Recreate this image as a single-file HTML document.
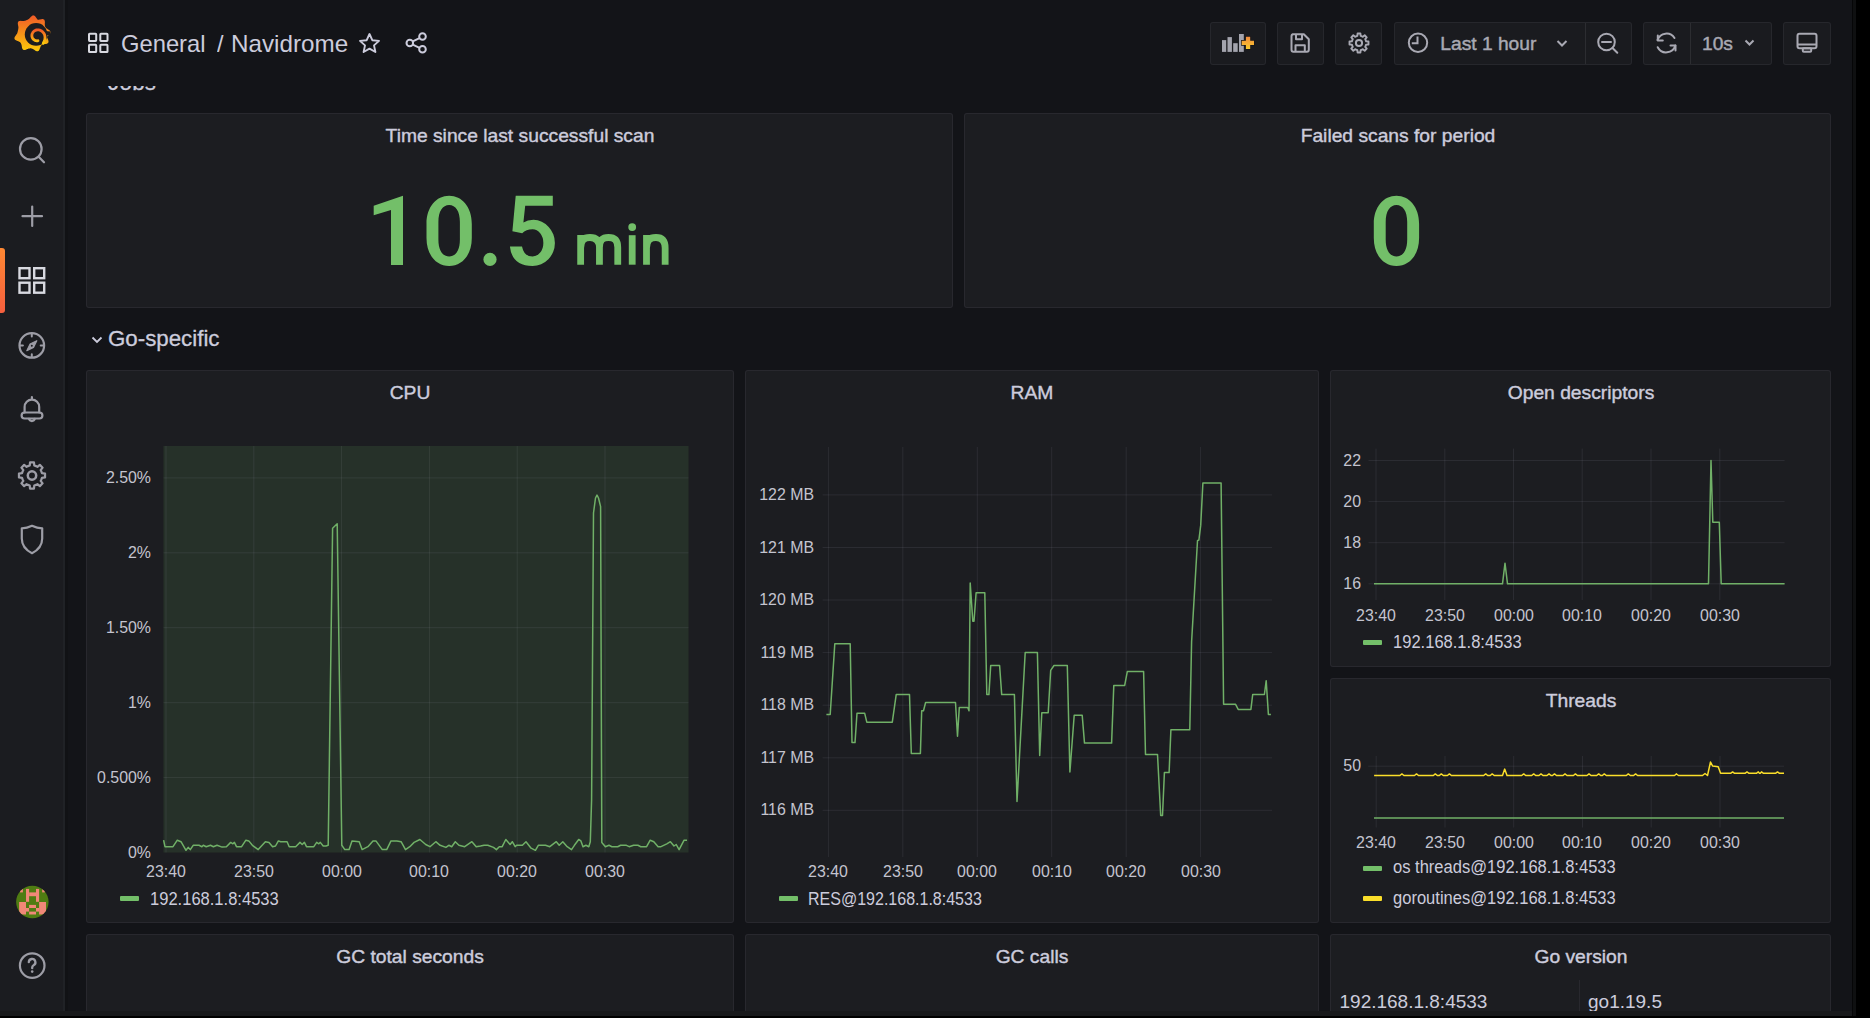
<!DOCTYPE html><html><head><meta charset="utf-8"><style>
html,body{margin:0;padding:0;}
body{width:1870px;height:1018px;overflow:hidden;background:#131418;position:relative;font-family:"Liberation Sans",sans-serif;}
.a{position:absolute;box-sizing:border-box;}
.t{position:absolute;white-space:nowrap;line-height:1;}
.panel{position:absolute;box-sizing:border-box;background:#1c1d21;border:1px solid rgba(204,204,220,0.07);border-radius:3px;}
.btn{position:absolute;box-sizing:border-box;background:#1a1b1f;border:1px solid rgba(204,204,220,0.07);border-radius:3px;}
svg.ov{position:absolute;left:0;top:0;}
</style></head><body>
<div class="a" style="left:0px;top:0px;width:63px;height:1018px;background:#1b1c20;"></div>
<div class="a" style="left:63px;top:0px;width:2px;height:1018px;background:#202226;"></div>
<div class="a" style="left:65px;top:0px;width:3px;height:1018px;background:#111215;"></div>
<div class="a" style="left:0;top:248px;width:5px;height:65px;border-radius:0 3px 3px 0;background:linear-gradient(0deg,#F55F3E,#FF8833);"></div>
<div class="a" style="left:1852px;top:0px;width:1px;height:1018px;background:#060607;"></div>
<div class="a" style="left:1853px;top:0px;width:3px;height:1018px;background:#0f1011;"></div>
<div class="a" style="left:1856px;top:0px;width:14px;height:1018px;background:#000;"></div>
<div class="panel" style="left:86px;top:113px;width:867px;height:195px;"></div>
<div class="panel" style="left:964px;top:113px;width:867px;height:195px;"></div>
<div class="panel" style="left:86px;top:370px;width:648px;height:553px;"></div>
<div class="panel" style="left:745px;top:370px;width:574px;height:553px;"></div>
<div class="panel" style="left:1330px;top:370px;width:501px;height:297px;"></div>
<div class="panel" style="left:1330px;top:678px;width:501px;height:245px;"></div>
<div class="panel" style="left:86px;top:934px;width:648px;height:96px;"></div>
<div class="panel" style="left:745px;top:934px;width:574px;height:96px;"></div>
<div class="panel" style="left:1330px;top:934px;width:501px;height:96px;"></div>
<div class="t" style="left:108.00px;top:71.92px;font-size:22.3px;color:#ccccdc;font-weight:normal;-webkit-text-stroke:0.3px #ccccdc;letter-spacing:0.3px;">Jobs</div>
<div class="a" style="left:68px;top:0px;width:1784px;height:86px;background:#131418;"></div>
<svg class="ov" width="1870" height="100" style="left:0;top:0">
<g fill="none" stroke="#d8d9e0" stroke-width="2">
<rect x="89" y="33.7" width="7.2" height="7.2" rx="0.6"/><rect x="100.3" y="33.7" width="7.2" height="7.2" rx="0.6"/>
<rect x="89" y="44.8" width="7.2" height="7.2" rx="0.6"/><rect x="100.3" y="44.8" width="7.2" height="7.2" rx="0.6"/>
</g>
<!-- star -->
<path d="M369.5,34 L372.3,40.2 L379,40.9 L374,45.4 L375.4,52 L369.5,48.6 L363.6,52 L365,45.4 L360,40.9 L366.7,40.2 Z" fill="none" stroke="#ccccdc" stroke-width="1.9" stroke-linejoin="round"/>
<!-- share -->
<g fill="none" stroke="#ccccdc" stroke-width="2">
<circle cx="422.5" cy="36.5" r="3.3"/><circle cx="409.8" cy="43" r="3.3"/><circle cx="422.5" cy="49.3" r="3.3"/>
<line x1="412.8" y1="41.4" x2="419.5" y2="38.1"/><line x1="412.8" y1="44.6" x2="419.5" y2="47.8"/>
</g>
</svg>
<div class="t" style="left:121.20px;top:32.28px;font-size:24px;color:#ccccdc;font-weight:normal;transform:scaleX(0.99);transform-origin:left center;">General</div>
<div class="t" style="left:216.50px;top:32.28px;font-size:24px;color:#ccccdc;font-weight:normal;transform:scaleX(0.975);transform-origin:left center;">/</div>
<div class="t" style="left:231.10px;top:32.28px;font-size:24px;color:#ccccdc;font-weight:normal;transform:scaleX(1.01);transform-origin:left center;">Navidrome</div>
<div class="btn" style="left:1210px;top:22px;width:56px;height:43px;"></div>
<div class="btn" style="left:1277px;top:22px;width:47px;height:43px;"></div>
<div class="btn" style="left:1335px;top:22px;width:47px;height:43px;"></div>
<div class="btn" style="left:1394px;top:22px;width:238px;height:43px;"></div>
<div class="btn" style="left:1643px;top:22px;width:129px;height:43px;"></div>
<div class="btn" style="left:1783px;top:22px;width:48px;height:43px;"></div>
<div class="a" style="left:1585px;top:23px;width:1px;height:41px;background:rgba(204,204,220,0.10);"></div>
<div class="a" style="left:1690px;top:23px;width:1px;height:41px;background:rgba(204,204,220,0.10);"></div>
<svg class="ov" width="1870" height="100" style="left:0;top:0">
<!-- add panel -->
<defs><linearGradient id="pg" x1="0" y1="0" x2="0" y2="1"><stop offset="0" stop-color="#F28A3C"/><stop offset="1" stop-color="#F8CB2E"/></linearGradient></defs>
<g fill="#a3a4ad">
<rect x="1222" y="40.1" width="4.2" height="11.8"/><rect x="1227.5" y="37.1" width="4.4" height="14.8"/><rect x="1233.2" y="43.2" width="4.5" height="8.7"/><rect x="1239" y="34" width="4.8" height="17.9"/>
</g>
<path d="M1245.9,36.7 H1250.2 V40.7 H1254 V45.1 H1250.2 V48.9 H1245.9 V45.1 H1241.7 V40.7 H1245.9 Z" fill="url(#pg)" stroke="#141518" stroke-width="1.2" paint-order="stroke"/>
<!-- save -->
<g fill="none" stroke="#a9a9b3" stroke-width="2" stroke-linejoin="round">
<path d="M1292.5,34.3 H1303.8 L1308.8,39.3 V49.8 Q1308.8,51.7 1306.9,51.7 H1293.4 Q1291.5,51.7 1291.5,49.8 V36.2 Q1291.5,34.3 1293.4,34.3 Z"/>
<path d="M1296,34.3 V39.3 H1302 V34.3"/>
<path d="M1295.5,51.7 V45.3 H1304.8 V51.7"/>
</g>
<!-- settings cog -->
<path d="M1356.21,36.26 L1357.35,35.89 L1357.57,33.51 L1360.43,33.51 L1360.65,35.89 L1361.79,36.26 L1362.86,36.81 L1364.70,35.28 L1366.72,37.30 L1365.19,39.14 L1365.74,40.21 L1366.11,41.35 L1368.49,41.57 L1368.49,44.43 L1366.11,44.65 L1365.74,45.79 L1365.19,46.86 L1366.72,48.70 L1364.70,50.72 L1362.86,49.19 L1361.79,49.74 L1360.65,50.11 L1360.43,52.49 L1357.57,52.49 L1357.35,50.11 L1356.21,49.74 L1355.14,49.19 L1353.30,50.72 L1351.28,48.70 L1352.81,46.86 L1352.26,45.79 L1351.89,44.65 L1349.51,44.43 L1349.51,41.57 L1351.89,41.35 L1352.26,40.21 L1352.81,39.14 L1351.28,37.30 L1353.30,35.28 L1355.14,36.81Z" fill="none" stroke="#a9a9b3" stroke-width="1.9" stroke-linejoin="round"/><circle cx="1359" cy="43" r="3.1" fill="none" stroke="#a9a9b3" stroke-width="2"/>
<!-- clock -->
<circle cx="1418" cy="42.7" r="9.2" fill="none" stroke="#a9a9b3" stroke-width="2"/>
<path d="M1417.5,36.5 V43.3 H1411.8" fill="none" stroke="#a9a9b3" stroke-width="2"/>
<!-- chevron -->
<path d="M1557.5,41 L1562,45.5 L1566.5,41" fill="none" stroke="#a9a9b3" stroke-width="2"/>
<!-- zoom out -->
<circle cx="1606.5" cy="42" r="8.3" fill="none" stroke="#a9a9b3" stroke-width="2"/>
<path d="M1602,42 H1611 M1612.5,48 L1617.3,52.8" fill="none" stroke="#a9a9b3" stroke-width="2" stroke-linecap="round"/>
<!-- refresh -->
<g fill="none" stroke="#a9a9b3" stroke-width="2" stroke-linecap="round" stroke-linejoin="round">
<path d="M1674.5,38 A9.5,9.5 0 0 0 1657.5,40"/>
<path d="M1657.8,35.5 V40.5 H1662.8"/>
<path d="M1657.7,47.2 A9.5,9.5 0 0 0 1675.3,45.5"/>
<path d="M1675.5,50.5 V45.5 H1670.5"/>
</g>
<path d="M1745.5,40.5 L1749.5,44.5 L1753.5,40.5" fill="none" stroke="#a9a9b3" stroke-width="2"/>
<!-- monitor -->
<g fill="none" stroke="#a9a9b3" stroke-width="2" stroke-linejoin="round">
<rect x="1797.5" y="33.8" width="19" height="14.5" rx="2"/>
<line x1="1797.5" y1="44.5" x2="1816.5" y2="44.5"/>
<rect x="1802.8" y="48.3" width="8.4" height="3.5" rx="1"/>
</g>
</svg>
<div class="t" style="left:1440.30px;top:33.75px;font-size:19.2px;color:#a9a9b3;font-weight:normal;-webkit-text-stroke:0.45px #a9a9b3;">Last 1 hour</div>
<div class="t" style="left:1702.00px;top:33.75px;font-size:19.2px;color:#a9a9b3;font-weight:normal;-webkit-text-stroke:0.45px #a9a9b3;">10s</div>
<div class="t" style="left:-80.50px;width:1200px;text-align:center;top:126.96px;font-size:18.6px;color:#ccccdc;font-weight:normal;transform:scaleX(1.035);transform-origin:center center;-webkit-text-stroke:0.4px #ccccdc;">Time since last successful scan</div>
<div class="t" style="left:797.50px;width:1200px;text-align:center;top:126.96px;font-size:18.6px;color:#ccccdc;font-weight:normal;transform:scaleX(1.035);transform-origin:center center;-webkit-text-stroke:0.4px #ccccdc;">Failed scans for period</div>
<svg class="ov" width="1870" height="300"><g fill="#73BF69">
<path d="M403,195.8 L373.7,205.7 L373.7,215.2 L391,209.9 L391,265.1 L403,265.1 Z"/>
<path fill-rule="evenodd" d="M449.15,195.8 C462.00,195.8 471.80,207 471.80,224 V238 C471.80,255 462.00,266 449.15,266 C436.30,266 426.50,255 426.50,238 V224 C426.50,207 436.30,195.8 449.15,195.8 Z M449.15,204.9 C455.60,204.9 459.90,211 459.90,222 V239.5 C459.90,250.5 455.60,256.5 449.15,256.5 C442.70,256.5 438.40,250.5 438.40,239.5 V222 C438.40,211 442.70,204.9 449.15,204.9 Z"/>
<circle cx="490" cy="259.4" r="6.6"/>
<path d="M515.7,195.8 H552.8 V205.8 H525.2 L523.4,222.5 Q527.5,219.8 533.5,219.8 A22.3,23.1 0 0 1 554.9,242.9 A22.3,23.1 0 0 1 532.6,266 Q512,266 509.9,246.4 H522.0 Q524,256.5 532.6,256.5 A10.75,13.6 0 0 0 543.35,242.9 A10.75,13.6 0 0 0 532.6,229.3 Q526,229.3 522.2,233.3 L512.4,231.3 Z"/>
<path fill-rule="evenodd" d="M1396.45,195.8 C1409.30,195.8 1419.10,207 1419.10,224 V238 C1419.10,255 1409.30,266 1396.45,266 C1383.60,266 1373.80,255 1373.80,238 V224 C1373.80,207 1383.60,195.8 1396.45,195.8 Z M1396.45,204.9 C1402.90,204.9 1407.20,211 1407.20,222 V239.5 C1407.20,250.5 1402.90,256.5 1396.45,256.5 C1390.00,256.5 1385.70,250.5 1385.70,239.5 V222 C1385.70,211 1390.00,204.9 1396.45,204.9 Z"/>
</g>
<g fill="none" stroke="#73BF69" stroke-width="6.8">
<path d="M580.65,264.7 V234.9 M580.65,248 C580.65,240 584.5,237.5 590,237.5 C596,237.5 599.45,240.5 599.45,247.5 V264.7 M599.45,247.5 C599.45,240 603,237.5 608.5,237.5 C614.5,237.5 617.75,240.5 617.75,247.5 V264.7"/>
<path d="M632.2,264.7 V235.2"/>
<path d="M646.5,264.7 V234.9 M646.5,248 C646.5,240 650.5,237.5 656,237.5 C662,237.5 665.15,241 665.15,248 V264.7"/>
</g>
<circle cx="632.2" cy="227.1" r="3.9" fill="#73BF69"/>
</svg>
<div class="t" style="left:108.00px;top:327.82px;font-size:22.3px;color:#ccccdc;font-weight:normal;-webkit-text-stroke:0.3px #ccccdc;">Go-specific</div>
<svg class="ov" width="200" height="400"><path d="M92.5,337.5 L97,342 L101.5,337.5" fill="none" stroke="#ccccdc" stroke-width="1.8"/></svg>
<div class="t" style="left:-190.00px;width:1200px;text-align:center;top:383.86px;font-size:18.6px;color:#ccccdc;font-weight:normal;transform:scaleX(1.035);transform-origin:center center;-webkit-text-stroke:0.4px #ccccdc;">CPU</div>
<div class="t" style="left:432.00px;width:1200px;text-align:center;top:383.86px;font-size:18.6px;color:#ccccdc;font-weight:normal;transform:scaleX(1.035);transform-origin:center center;-webkit-text-stroke:0.4px #ccccdc;">RAM</div>
<div class="t" style="left:980.50px;width:1200px;text-align:center;top:383.86px;font-size:18.6px;color:#ccccdc;font-weight:normal;transform:scaleX(1.035);transform-origin:center center;-webkit-text-stroke:0.4px #ccccdc;">Open descriptors</div>
<div class="t" style="left:980.50px;width:1200px;text-align:center;top:691.86px;font-size:18.6px;color:#ccccdc;font-weight:normal;transform:scaleX(1.035);transform-origin:center center;-webkit-text-stroke:0.4px #ccccdc;">Threads</div>
<div class="t" style="left:-190.00px;width:1200px;text-align:center;top:947.96px;font-size:18.6px;color:#ccccdc;font-weight:normal;transform:scaleX(1.035);transform-origin:center center;-webkit-text-stroke:0.4px #ccccdc;">GC total seconds</div>
<div class="t" style="left:432.00px;width:1200px;text-align:center;top:947.96px;font-size:18.6px;color:#ccccdc;font-weight:normal;transform:scaleX(1.035);transform-origin:center center;-webkit-text-stroke:0.4px #ccccdc;">GC calls</div>
<div class="t" style="left:980.50px;width:1200px;text-align:center;top:947.96px;font-size:18.6px;color:#ccccdc;font-weight:normal;transform:scaleX(1.035);transform-origin:center center;-webkit-text-stroke:0.4px #ccccdc;">Go version</div>
<div class="t" style="left:-449.50px;width:600px;text-align:right;top:469.06px;font-size:17.3px;color:#c4c4cf;font-weight:normal;transform:scaleX(0.92);transform-origin:right center;">2.50%</div>
<div class="t" style="left:-449.50px;width:600px;text-align:right;top:543.98px;font-size:17.3px;color:#c4c4cf;font-weight:normal;transform:scaleX(0.92);transform-origin:right center;">2%</div>
<div class="t" style="left:-449.50px;width:600px;text-align:right;top:618.90px;font-size:17.3px;color:#c4c4cf;font-weight:normal;transform:scaleX(0.92);transform-origin:right center;">1.50%</div>
<div class="t" style="left:-449.50px;width:600px;text-align:right;top:693.82px;font-size:17.3px;color:#c4c4cf;font-weight:normal;transform:scaleX(0.92);transform-origin:right center;">1%</div>
<div class="t" style="left:-449.50px;width:600px;text-align:right;top:768.74px;font-size:17.3px;color:#c4c4cf;font-weight:normal;transform:scaleX(0.92);transform-origin:right center;">0.500%</div>
<div class="t" style="left:-449.50px;width:600px;text-align:right;top:843.66px;font-size:17.3px;color:#c4c4cf;font-weight:normal;transform:scaleX(0.92);transform-origin:right center;">0%</div>
<div class="t" style="left:-434.00px;width:1200px;text-align:center;top:863.16px;font-size:17.3px;color:#c4c4cf;font-weight:normal;transform:scaleX(0.92);transform-origin:center center;">23:40</div>
<div class="t" style="left:-346.20px;width:1200px;text-align:center;top:863.16px;font-size:17.3px;color:#c4c4cf;font-weight:normal;transform:scaleX(0.92);transform-origin:center center;">23:50</div>
<div class="t" style="left:-258.40px;width:1200px;text-align:center;top:863.16px;font-size:17.3px;color:#c4c4cf;font-weight:normal;transform:scaleX(0.92);transform-origin:center center;">00:00</div>
<div class="t" style="left:-170.60px;width:1200px;text-align:center;top:863.16px;font-size:17.3px;color:#c4c4cf;font-weight:normal;transform:scaleX(0.92);transform-origin:center center;">00:10</div>
<div class="t" style="left:-82.80px;width:1200px;text-align:center;top:863.16px;font-size:17.3px;color:#c4c4cf;font-weight:normal;transform:scaleX(0.92);transform-origin:center center;">00:20</div>
<div class="t" style="left:5.00px;width:1200px;text-align:center;top:863.16px;font-size:17.3px;color:#c4c4cf;font-weight:normal;transform:scaleX(0.92);transform-origin:center center;">00:30</div>
<div class="a" style="left:120px;top:896px;width:19px;height:5px;background:#73BF69;border-radius:1px;"></div>
<div class="t" style="left:149.80px;top:890.99px;font-size:17.5px;color:#ccccdc;font-weight:normal;transform:scaleX(0.945);transform-origin:left center;">192.168.1.8:4533</div>
<div class="t" style="left:214.00px;width:600px;text-align:right;top:486.06px;font-size:17.3px;color:#c4c4cf;font-weight:normal;transform:scaleX(0.92);transform-origin:right center;">122 MB</div>
<div class="t" style="left:214.00px;width:600px;text-align:right;top:538.63px;font-size:17.3px;color:#c4c4cf;font-weight:normal;transform:scaleX(0.92);transform-origin:right center;">121 MB</div>
<div class="t" style="left:214.00px;width:600px;text-align:right;top:591.20px;font-size:17.3px;color:#c4c4cf;font-weight:normal;transform:scaleX(0.92);transform-origin:right center;">120 MB</div>
<div class="t" style="left:214.00px;width:600px;text-align:right;top:643.77px;font-size:17.3px;color:#c4c4cf;font-weight:normal;transform:scaleX(0.92);transform-origin:right center;">119 MB</div>
<div class="t" style="left:214.00px;width:600px;text-align:right;top:696.34px;font-size:17.3px;color:#c4c4cf;font-weight:normal;transform:scaleX(0.92);transform-origin:right center;">118 MB</div>
<div class="t" style="left:214.00px;width:600px;text-align:right;top:748.91px;font-size:17.3px;color:#c4c4cf;font-weight:normal;transform:scaleX(0.92);transform-origin:right center;">117 MB</div>
<div class="t" style="left:214.00px;width:600px;text-align:right;top:801.48px;font-size:17.3px;color:#c4c4cf;font-weight:normal;transform:scaleX(0.92);transform-origin:right center;">116 MB</div>
<div class="t" style="left:228.40px;width:1200px;text-align:center;top:862.86px;font-size:17.3px;color:#c4c4cf;font-weight:normal;transform:scaleX(0.92);transform-origin:center center;">23:40</div>
<div class="t" style="left:302.84px;width:1200px;text-align:center;top:862.86px;font-size:17.3px;color:#c4c4cf;font-weight:normal;transform:scaleX(0.92);transform-origin:center center;">23:50</div>
<div class="t" style="left:377.28px;width:1200px;text-align:center;top:862.86px;font-size:17.3px;color:#c4c4cf;font-weight:normal;transform:scaleX(0.92);transform-origin:center center;">00:00</div>
<div class="t" style="left:451.72px;width:1200px;text-align:center;top:862.86px;font-size:17.3px;color:#c4c4cf;font-weight:normal;transform:scaleX(0.92);transform-origin:center center;">00:10</div>
<div class="t" style="left:526.16px;width:1200px;text-align:center;top:862.86px;font-size:17.3px;color:#c4c4cf;font-weight:normal;transform:scaleX(0.92);transform-origin:center center;">00:20</div>
<div class="t" style="left:600.60px;width:1200px;text-align:center;top:862.86px;font-size:17.3px;color:#c4c4cf;font-weight:normal;transform:scaleX(0.92);transform-origin:center center;">00:30</div>
<div class="a" style="left:779px;top:896px;width:19px;height:5px;background:#73BF69;border-radius:1px;"></div>
<div class="t" style="left:807.80px;top:890.99px;font-size:17.5px;color:#ccccdc;font-weight:normal;transform:scaleX(0.915);transform-origin:left center;">RES@192.168.1.8:4533</div>
<div class="t" style="left:761.00px;width:600px;text-align:right;top:451.66px;font-size:17.3px;color:#c4c4cf;font-weight:normal;transform:scaleX(0.92);transform-origin:right center;">22</div>
<div class="t" style="left:761.00px;width:600px;text-align:right;top:492.76px;font-size:17.3px;color:#c4c4cf;font-weight:normal;transform:scaleX(0.92);transform-origin:right center;">20</div>
<div class="t" style="left:761.00px;width:600px;text-align:right;top:533.86px;font-size:17.3px;color:#c4c4cf;font-weight:normal;transform:scaleX(0.92);transform-origin:right center;">18</div>
<div class="t" style="left:761.00px;width:600px;text-align:right;top:574.96px;font-size:17.3px;color:#c4c4cf;font-weight:normal;transform:scaleX(0.92);transform-origin:right center;">16</div>
<div class="t" style="left:776.00px;width:1200px;text-align:center;top:606.66px;font-size:17.3px;color:#c4c4cf;font-weight:normal;transform:scaleX(0.92);transform-origin:center center;">23:40</div>
<div class="t" style="left:844.75px;width:1200px;text-align:center;top:606.66px;font-size:17.3px;color:#c4c4cf;font-weight:normal;transform:scaleX(0.92);transform-origin:center center;">23:50</div>
<div class="t" style="left:913.50px;width:1200px;text-align:center;top:606.66px;font-size:17.3px;color:#c4c4cf;font-weight:normal;transform:scaleX(0.92);transform-origin:center center;">00:00</div>
<div class="t" style="left:982.25px;width:1200px;text-align:center;top:606.66px;font-size:17.3px;color:#c4c4cf;font-weight:normal;transform:scaleX(0.92);transform-origin:center center;">00:10</div>
<div class="t" style="left:1051.00px;width:1200px;text-align:center;top:606.66px;font-size:17.3px;color:#c4c4cf;font-weight:normal;transform:scaleX(0.92);transform-origin:center center;">00:20</div>
<div class="t" style="left:1119.75px;width:1200px;text-align:center;top:606.66px;font-size:17.3px;color:#c4c4cf;font-weight:normal;transform:scaleX(0.92);transform-origin:center center;">00:30</div>
<div class="a" style="left:1363px;top:639.5px;width:19px;height:5.0px;background:#73BF69;border-radius:1px;"></div>
<div class="t" style="left:1393.00px;top:633.59px;font-size:17.5px;color:#ccccdc;font-weight:normal;transform:scaleX(0.945);transform-origin:left center;">192.168.1.8:4533</div>
<div class="t" style="left:761.00px;width:600px;text-align:right;top:757.46px;font-size:17.3px;color:#c4c4cf;font-weight:normal;transform:scaleX(0.92);transform-origin:right center;">50</div>
<div class="t" style="left:776.20px;width:1200px;text-align:center;top:833.66px;font-size:17.3px;color:#c4c4cf;font-weight:normal;transform:scaleX(0.92);transform-origin:center center;">23:40</div>
<div class="t" style="left:844.95px;width:1200px;text-align:center;top:833.66px;font-size:17.3px;color:#c4c4cf;font-weight:normal;transform:scaleX(0.92);transform-origin:center center;">23:50</div>
<div class="t" style="left:913.70px;width:1200px;text-align:center;top:833.66px;font-size:17.3px;color:#c4c4cf;font-weight:normal;transform:scaleX(0.92);transform-origin:center center;">00:00</div>
<div class="t" style="left:982.45px;width:1200px;text-align:center;top:833.66px;font-size:17.3px;color:#c4c4cf;font-weight:normal;transform:scaleX(0.92);transform-origin:center center;">00:10</div>
<div class="t" style="left:1051.20px;width:1200px;text-align:center;top:833.66px;font-size:17.3px;color:#c4c4cf;font-weight:normal;transform:scaleX(0.92);transform-origin:center center;">00:20</div>
<div class="t" style="left:1119.95px;width:1200px;text-align:center;top:833.66px;font-size:17.3px;color:#c4c4cf;font-weight:normal;transform:scaleX(0.92);transform-origin:center center;">00:30</div>
<div class="a" style="left:1363px;top:866px;width:19px;height:5px;background:#73BF69;border-radius:1px;"></div>
<div class="t" style="left:1393.00px;top:859.49px;font-size:17.5px;color:#ccccdc;font-weight:normal;transform:scaleX(0.945);transform-origin:left center;">os threads@192.168.1.8:4533</div>
<div class="a" style="left:1363px;top:896px;width:19px;height:5px;background:#FADE2A;border-radius:1px;"></div>
<div class="t" style="left:1393.00px;top:889.59px;font-size:17.5px;color:#ccccdc;font-weight:normal;transform:scaleX(0.945);transform-origin:left center;">goroutines@192.168.1.8:4533</div>
<svg class="ov" width="1870" height="1018"><rect x="163.5" y="446" width="525" height="406.5" fill="rgba(115,191,105,0.125)"/><line x1="166.0" y1="446" x2="166.0" y2="852.5" stroke="rgba(204,204,220,0.09)" stroke-width="1"/><line x1="253.8" y1="446" x2="253.8" y2="852.5" stroke="rgba(204,204,220,0.09)" stroke-width="1"/><line x1="341.6" y1="446" x2="341.6" y2="852.5" stroke="rgba(204,204,220,0.09)" stroke-width="1"/><line x1="429.4" y1="446" x2="429.4" y2="852.5" stroke="rgba(204,204,220,0.09)" stroke-width="1"/><line x1="517.2" y1="446" x2="517.2" y2="852.5" stroke="rgba(204,204,220,0.09)" stroke-width="1"/><line x1="605.0" y1="446" x2="605.0" y2="852.5" stroke="rgba(204,204,220,0.09)" stroke-width="1"/><line x1="163.5" y1="477.9" x2="688.5" y2="477.9" stroke="rgba(204,204,220,0.09)" stroke-width="1"/><line x1="163.5" y1="552.8" x2="688.5" y2="552.8" stroke="rgba(204,204,220,0.09)" stroke-width="1"/><line x1="163.5" y1="627.7" x2="688.5" y2="627.7" stroke="rgba(204,204,220,0.09)" stroke-width="1"/><line x1="163.5" y1="702.7" x2="688.5" y2="702.7" stroke="rgba(204,204,220,0.09)" stroke-width="1"/><line x1="163.5" y1="777.6" x2="688.5" y2="777.6" stroke="rgba(204,204,220,0.09)" stroke-width="1"/><path d="M163.6,840.2 L165.0,846.7 L173.0,846.7 L177.3,840.2 L181.0,841.7 L186.0,850.3 L188.2,847.4 L190.3,849.6 L193.2,845.3 L199.0,845.3 L201.9,846.7 L203.3,845.3 L206.2,846.7 L210.5,845.3 L213.4,846.7 L217.0,845.3 L222.1,847.1 L226.4,846.7 L230.7,842.4 L232.9,843.8 L234.4,842.4 L236.5,846.7 L241.6,846.7 L245.9,840.2 L248.8,840.9 L252.4,845.3 L258.2,849.6 L265.4,841.7 L269.0,842.4 L272.6,846.7 L275.5,846.0 L278.4,840.9 L280.6,841.7 L287.1,841.7 L289.2,846.7 L295.7,846.7 L300.0,842.4 L302.2,844.5 L304.4,842.4 L306.5,846.7 L313.8,846.7 L316.7,842.4 L318.8,843.8 L320.3,842.4 L323.2,846.0 L326.0,846.0 L328.2,845.3 L332.6,528.3 L337.2,523.7 L341.8,845.3 L344.8,849.6 L349.1,849.6 L352.0,840.9 L359.2,841.7 L362.1,849.6 L367.9,846.7 L373.0,840.9 L375.9,840.9 L382.3,849.6 L386.7,849.6 L391.0,840.9 L396.8,840.9 L401.1,841.7 L405.5,849.6 L409.8,846.7 L414.1,842.4 L419.9,839.5 L425.7,844.5 L430.0,846.7 L435.8,841.7 L440.1,845.3 L445.9,847.4 L448.8,845.3 L451.7,846.7 L455.3,841.7 L458.9,845.3 L464.7,846.7 L471.9,841.7 L476.2,846.7 L480.5,846.0 L484.1,845.3 L487.8,845.3 L493.5,847.4 L496.4,849.6 L499.3,846.7 L502.2,846.7 L505.8,839.5 L510.1,844.5 L512.3,841.7 L515.2,846.7 L516.6,845.3 L522.4,845.3 L526.0,841.7 L531.1,848.2 L535.4,850.3 L538.3,845.3 L545.5,845.3 L549.8,846.7 L556.3,841.7 L559.2,845.3 L562.8,841.7 L567.2,846.7 L571.5,849.6 L574.4,845.3 L578.7,839.5 L580.9,840.9 L583.0,846.7 L585.9,845.3 L588.8,846.7 L590.3,841.7 L591.6,800.0 L593.5,513.0 L595.5,498.0 L597.0,495.1 L598.5,498.0 L600.6,506.6 L601.8,842.4 L605.4,846.7 L609.0,845.3 L611.9,846.7 L617.7,846.7 L620.6,845.3 L626.4,845.3 L629.2,846.7 L633.6,845.3 L637.9,845.3 L640.8,846.7 L646.6,846.7 L650.2,840.2 L653.8,841.7 L658.1,846.7 L661.0,846.7 L666.8,843.8 L670.4,841.7 L674.0,846.0 L676.2,844.5 L679.1,849.6 L684.1,840.2 L687.0,840.2" fill="none" stroke="#70b067" stroke-width="1.5" stroke-linejoin="round"/><line x1="828.4" y1="447" x2="828.4" y2="857" stroke="rgba(204,204,220,0.09)" stroke-width="1"/><line x1="902.8" y1="447" x2="902.8" y2="857" stroke="rgba(204,204,220,0.09)" stroke-width="1"/><line x1="977.3" y1="447" x2="977.3" y2="857" stroke="rgba(204,204,220,0.09)" stroke-width="1"/><line x1="1051.7" y1="447" x2="1051.7" y2="857" stroke="rgba(204,204,220,0.09)" stroke-width="1"/><line x1="1126.2" y1="447" x2="1126.2" y2="857" stroke="rgba(204,204,220,0.09)" stroke-width="1"/><line x1="1200.6" y1="447" x2="1200.6" y2="857" stroke="rgba(204,204,220,0.09)" stroke-width="1"/><line x1="822.6" y1="494.9" x2="1272" y2="494.9" stroke="rgba(204,204,220,0.09)" stroke-width="1"/><line x1="822.6" y1="547.5" x2="1272" y2="547.5" stroke="rgba(204,204,220,0.09)" stroke-width="1"/><line x1="822.6" y1="600.0" x2="1272" y2="600.0" stroke="rgba(204,204,220,0.09)" stroke-width="1"/><line x1="822.6" y1="652.6" x2="1272" y2="652.6" stroke="rgba(204,204,220,0.09)" stroke-width="1"/><line x1="822.6" y1="705.2" x2="1272" y2="705.2" stroke="rgba(204,204,220,0.09)" stroke-width="1"/><line x1="822.6" y1="757.8" x2="1272" y2="757.8" stroke="rgba(204,204,220,0.09)" stroke-width="1"/><line x1="822.6" y1="810.3" x2="1272" y2="810.3" stroke="rgba(204,204,220,0.09)" stroke-width="1"/><path d="M826.4,714.5 L830.2,714.5 L834.8,643.8 L850.2,643.8 L852.0,742.6 L855.0,742.6 L857.0,713.3 L864.7,713.3 L866.8,722.2 L892.3,722.2 L896.2,694.6 L909.5,694.6 L911.3,753.4 L920.4,753.4 L921.7,710.7 L923.5,710.7 L925.6,702.5 L955.5,702.5 L957.5,736.2 L959.3,707.4 L967.7,707.5 L969.0,710.8 L970.2,583.0 L972.8,621.3 L974.0,621.3 L976.1,592.7 L984.8,592.7 L986.8,694.6 L988.9,694.6 L990.7,665.5 L999.6,665.5 L1001.7,694.6 L1014.4,694.6 L1017.0,801.4 L1025.2,652.5 L1037.4,652.5 L1039.7,755.4 L1041.8,712.7 L1048.2,712.7 L1050.7,670.3 L1054.0,665.5 L1067.3,665.5 L1069.9,772.0 L1074.2,715.3 L1082.2,715.3 L1084.5,743.1 L1111.6,743.1 L1113.8,685.4 L1124.7,685.4 L1127.3,671.6 L1143.6,671.6 L1145.5,754.4 L1157.5,754.4 L1160.7,815.5 L1162.5,815.5 L1164.4,772.6 L1169.1,772.6 L1170.9,729.7 L1189.8,729.7 L1191.6,641.8 L1197.5,540.7 L1198.9,540.0 L1200.7,525.4 L1202.9,482.9 L1221.1,482.9 L1223.6,704.3 L1235.6,704.3 L1238.2,709.4 L1250.9,709.4 L1252.7,694.5 L1264.4,694.5 L1266.2,680.7 L1268.4,714.5 L1270.9,714.5" fill="none" stroke="#70b067" stroke-width="1.5" stroke-linejoin="round"/><line x1="1376.0" y1="448.6" x2="1376.0" y2="600" stroke="rgba(204,204,220,0.09)" stroke-width="1"/><line x1="1444.8" y1="448.6" x2="1444.8" y2="600" stroke="rgba(204,204,220,0.09)" stroke-width="1"/><line x1="1513.5" y1="448.6" x2="1513.5" y2="600" stroke="rgba(204,204,220,0.09)" stroke-width="1"/><line x1="1582.2" y1="448.6" x2="1582.2" y2="600" stroke="rgba(204,204,220,0.09)" stroke-width="1"/><line x1="1651.0" y1="448.6" x2="1651.0" y2="600" stroke="rgba(204,204,220,0.09)" stroke-width="1"/><line x1="1719.8" y1="448.6" x2="1719.8" y2="600" stroke="rgba(204,204,220,0.09)" stroke-width="1"/><line x1="1368.5" y1="460.5" x2="1784.6" y2="460.5" stroke="rgba(204,204,220,0.09)" stroke-width="1"/><line x1="1368.5" y1="501.6" x2="1784.6" y2="501.6" stroke="rgba(204,204,220,0.09)" stroke-width="1"/><line x1="1368.5" y1="542.7" x2="1784.6" y2="542.7" stroke="rgba(204,204,220,0.09)" stroke-width="1"/><line x1="1368.5" y1="583.8" x2="1784.6" y2="583.8" stroke="rgba(204,204,220,0.09)" stroke-width="1"/><path d="M1374.0,583.8 L1502.5,583.8 L1505.0,563.2 L1507.5,583.8 L1708.5,583.8 L1711.0,460.5 L1712.8,522.2 L1719.3,522.2 L1721.2,583.8 L1784.6,583.8" fill="none" stroke="#70b067" stroke-width="1.5" stroke-linejoin="round"/><line x1="1376.2" y1="756" x2="1376.2" y2="827.5" stroke="rgba(204,204,220,0.09)" stroke-width="1"/><line x1="1445.0" y1="756" x2="1445.0" y2="827.5" stroke="rgba(204,204,220,0.09)" stroke-width="1"/><line x1="1513.7" y1="756" x2="1513.7" y2="827.5" stroke="rgba(204,204,220,0.09)" stroke-width="1"/><line x1="1582.5" y1="756" x2="1582.5" y2="827.5" stroke="rgba(204,204,220,0.09)" stroke-width="1"/><line x1="1651.2" y1="756" x2="1651.2" y2="827.5" stroke="rgba(204,204,220,0.09)" stroke-width="1"/><line x1="1720.0" y1="756" x2="1720.0" y2="827.5" stroke="rgba(204,204,220,0.09)" stroke-width="1"/><line x1="1368.2" y1="766.2" x2="1784" y2="766.2" stroke="rgba(204,204,220,0.09)" stroke-width="1"/><line x1="1374" y1="817.9" x2="1784" y2="817.9" stroke="#70b067" stroke-width="1.5"/><path d="M1374.1,775.5 L1399.9,775.5 L1401.9,773.9 L1403.9,775.5 L1414.5,775.5 L1416.5,773.9 L1418.5,775.5 L1433.3,775.5 L1435.3,773.9 L1437.3,775.5 L1439.3,775.5 L1441.3,773.9 L1443.3,775.5 L1447.4,775.5 L1449.4,773.9 L1451.4,775.5 L1483.7,775.5 L1485.7,773.9 L1487.7,775.5 L1490.2,775.5 L1492.2,773.9 L1494.2,775.5 L1502.5,775.5 L1504.7,769.1 L1507.0,775.5 L1521.7,775.5 L1523.7,773.9 L1525.7,775.5 L1531.7,775.5 L1533.7,773.9 L1535.7,775.5 L1539.0,775.5 L1541.0,773.9 L1543.0,775.5 L1547.0,775.5 L1549.0,773.9 L1551.0,775.5 L1552.5,775.5 L1554.5,773.9 L1556.5,775.5 L1563.0,775.5 L1565.0,773.9 L1567.0,775.5 L1573.4,775.5 L1575.4,773.9 L1577.4,775.5 L1587.0,775.5 L1589.0,773.9 L1591.0,775.5 L1596.7,775.5 L1598.7,773.9 L1600.7,775.5 L1602.3,775.5 L1604.3,773.9 L1606.3,775.5 L1626.3,775.5 L1628.3,773.9 L1630.3,775.5 L1633.6,775.5 L1635.6,773.9 L1637.6,775.5 L1674.5,775.5 L1676.5,773.9 L1676.5,774.0 L1678.5,775.5 L1702.5,775.5 L1705.0,773.5 L1707.5,775.5 L1710.5,762.0 L1712.6,766.0 L1718.2,766.8 L1720.6,773.3 L1730.6,773.3 L1732.6,771.9 L1734.6,773.3 L1745.0,773.3 L1747.0,771.9 L1749.0,773.3 L1756.3,773.3 L1758.3,771.9 L1759.5,773.3 L1760.3,773.3 L1761.5,771.9 L1763.5,773.3 L1775.5,773.3 L1777.5,771.9 L1779.5,773.3 L1784.0,773.3" fill="none" stroke="#FADE2A" stroke-width="1.5" stroke-linejoin="round"/></svg>
<div class="a" style="left:1331px;top:980px;width:499px;height:31px;overflow:hidden;">
<div class="a" style="left:248px;top:0;width:1px;height:40px;background:rgba(204,204,220,0.07);"></div>
<div class="t" style="left:8.5px;top:11.82px;font-size:19px;color:#ccccdc;">192.168.1.8:4533</div>
<div class="t" style="left:257px;top:11.82px;font-size:19px;color:#ccccdc;">go1.19.5</div>
</div>
<svg class="ov" width="70" height="1018">
<defs><linearGradient id="lg" x1="0" y1="0" x2="0" y2="1"><stop offset="0" stop-color="#F05A28"/><stop offset="1" stop-color="#FBCA0A"/></linearGradient></defs>
<path d="M50.0,33.7 L49.8,34.0 L49.5,34.3 L49.2,34.6 L48.9,34.9 L48.6,35.1 L48.4,35.4 L48.1,35.6 L47.8,35.9 L47.6,36.1 L47.4,36.4 L47.2,36.6 L47.0,36.8 L47.1,37.1 L47.1,37.4 L47.2,37.7 L47.4,38.0 L47.5,38.4 L47.6,38.7 L47.8,39.1 L48.0,39.4 L48.1,39.8 L48.2,40.2 L48.4,40.6 L48.5,40.9 L48.5,41.3 L48.5,41.7 L48.5,42.0 L48.4,42.3 L48.3,42.6 L48.1,42.9 L47.9,43.1 L47.6,43.3 L47.3,43.5 L47.0,43.7 L46.6,43.8 L46.2,43.9 L45.8,44.0 L45.4,44.0 L45.0,44.1 L44.6,44.1 L44.3,44.2 L43.9,44.3 L43.6,44.3 L43.3,44.4 L43.0,44.5 L42.7,44.6 L42.4,44.7 L42.2,44.8 L41.9,44.9 L41.7,45.0 L41.5,45.2 L41.3,45.4 L41.2,45.6 L41.0,45.8 L40.9,46.1 L40.7,46.3 L40.6,46.6 L40.5,46.9 L40.3,47.2 L40.2,47.6 L40.1,47.9 L39.9,48.3 L39.8,48.6 L39.7,49.0 L39.5,49.4 L39.3,49.7 L39.2,50.1 L38.9,50.4 L38.7,50.7 L38.5,50.9 L38.2,51.1 L37.9,51.2 L37.6,51.3 L37.2,51.3 L36.9,51.3 L36.6,51.2 L36.2,51.0 L35.9,50.9 L35.5,50.7 L35.2,50.5 L34.8,50.3 L34.5,50.0 L34.2,49.8 L33.9,49.6 L33.6,49.4 L33.3,49.2 L33.0,49.1 L32.7,48.9 L32.5,48.8 L32.2,48.7 L31.9,48.6 L31.7,48.5 L31.4,48.5 L31.2,48.4 L30.9,48.3 L30.7,48.3 L30.4,48.3 L30.1,48.3 L29.9,48.4 L29.6,48.4 L29.3,48.4 L29.1,48.5 L28.8,48.6 L28.5,48.6 L28.2,48.7 L27.9,48.9 L27.5,49.0 L27.2,49.1 L26.8,49.3 L26.5,49.5 L26.1,49.6 L25.7,49.7 L25.3,49.9 L25.0,50.0 L24.6,50.0 L24.2,50.0 L23.9,50.0 L23.6,49.9 L23.3,49.8 L23.0,49.6 L22.8,49.4 L22.6,49.1 L22.4,48.8 L22.2,48.5 L22.1,48.1 L22.0,47.7 L21.9,47.3 L21.9,46.9 L21.8,46.5 L21.8,46.1 L21.7,45.8 L21.6,45.4 L21.6,45.1 L21.5,44.8 L21.4,44.5 L21.3,44.2 L21.2,43.9 L21.1,43.7 L21.0,43.4 L20.9,43.2 L20.8,43.0 L20.6,42.8 L20.4,42.6 L20.2,42.4 L20.0,42.3 L19.8,42.1 L19.5,41.9 L19.3,41.8 L19.0,41.6 L18.7,41.5 L18.4,41.3 L18.1,41.2 L17.7,41.1 L17.4,40.9 L17.0,40.8 L16.6,40.6 L16.3,40.5 L15.9,40.3 L15.6,40.1 L15.3,39.9 L15.0,39.6 L14.8,39.4 L14.6,39.1 L14.5,38.8 L14.5,38.5 L14.4,38.1 L14.5,37.8 L14.6,37.4 L14.7,37.1 L14.9,36.7 L15.1,36.4 L15.3,36.1 L15.6,35.7 L15.8,35.4 L16.0,35.1 L16.2,34.8 L16.4,34.5 L16.6,34.2 L16.8,34.0 L17.0,33.7 L17.1,33.4 L17.2,33.2 L17.3,32.9 L17.4,32.7 L17.5,32.4 L17.5,32.2 L17.6,31.9 L17.7,31.7 L17.7,31.4 L17.8,31.2 L17.8,30.9 L17.9,30.7 L18.0,30.4 L18.0,30.2 L18.1,29.9 L18.1,29.7 L18.2,29.4 L18.2,29.2 L18.3,28.9 L18.3,28.6 L18.3,28.4 L18.4,28.1 L18.4,27.8 L18.4,27.6 L18.4,27.3 L18.4,27.0 L18.3,26.6 L18.3,26.3 L18.2,25.9 L18.1,25.6 L18.1,25.2 L18.0,24.8 L17.9,24.4 L17.9,24.0 L17.8,23.6 L17.8,23.2 L17.8,22.9 L17.9,22.5 L18.0,22.2 L18.1,21.9 L18.3,21.6 L18.5,21.4 L18.8,21.2 L19.1,21.1 L19.5,21.0 L19.8,20.9 L20.2,20.9 L20.6,20.8 L21.0,20.8 L21.4,20.9 L21.8,20.9 L22.2,20.9 L22.6,20.9 L22.9,20.9 L23.3,20.9 L23.6,20.9 L23.9,20.9 L24.2,20.9 L24.5,20.8 L24.7,20.8 L25.0,20.7 L25.3,20.7 L25.5,20.6 L25.8,20.5 L26.0,20.4 L26.2,20.3 L26.5,20.2 L26.7,20.1 L27.0,20.0 L27.2,19.9 L27.4,19.8 L27.6,19.7 L27.9,19.6 L28.1,19.4 L28.3,19.3 L28.6,19.1 L28.8,19.0 L29.0,18.8 L29.3,18.6 L29.5,18.4 L29.7,18.1 L30.0,17.9 L30.2,17.6 L30.5,17.3 L30.7,17.0 L31.0,16.7 L31.3,16.4 L31.6,16.2 L31.9,15.9 L32.2,15.7 L32.5,15.5 L32.8,15.4 L33.2,15.4 L33.5,15.3 L33.8,15.4 L34.1,15.5 L34.4,15.7 L34.7,15.9 L35.0,16.1 L35.2,16.4 L35.5,16.7 L35.7,17.0 L36.0,17.4 L36.2,17.7 L36.4,18.0 L36.6,18.3 L36.8,18.6 L37.0,18.9 L37.2,19.1 L37.4,19.4 L37.6,19.6 L37.8,19.8 L38.1,19.8 L38.4,19.8 L38.7,19.7 L39.0,19.7 L39.4,19.6 L39.7,19.6 L40.1,19.5 L40.4,19.4 L40.8,19.3 L41.2,19.3 L41.6,19.2 L42.0,19.1 L42.4,19.1 L42.8,19.1 L43.1,19.2 L43.5,19.3 L43.8,19.4 L44.0,19.6 L44.3,19.8 L44.4,20.1 L44.6,20.4 L44.7,20.8 L44.8,21.1 L44.8,21.5 L44.9,21.9 L44.9,22.3 L44.9,22.7 L44.8,23.1 L44.8,23.5 L44.8,23.9 L44.8,24.2 L44.8,24.5 L44.8,24.9 L44.8,25.2 L44.9,25.5 L44.9,25.8 L45.0,26.0 L45.0,26.3 L45.1,26.5 L45.2,26.8 L45.3,27.0 L45.5,27.2 L45.6,27.4 L45.8,27.6 L46.0,27.8 L46.2,28.0 L46.4,28.2 L46.7,28.4 L46.9,28.6 L47.2,28.8 L47.5,29.0 L47.8,29.2 L48.1,29.4 L48.5,29.6 L48.8,29.9 L49.1,30.1 L49.4,30.3 L49.7,30.6 L50.0,30.9 L50.2,31.2 L50.4,31.5 L50.5,31.8 L50.5,32.1 L50.5,32.4 L50.5,32.7 L50.4,33.1 L50.2,33.4Z" fill="url(#lg)"/>
<circle cx="36.1" cy="34.4" r="11.3" fill="#1b1c20"/><path d="M45,31 L50.5,31.5 L50.5,35 L45,35.5 Z" fill="#1b1c20"/>
<path d="M43.2,43.2 L43.6,42.6 L43.9,41.9 L44.2,41.3 L44.5,40.7 L44.7,40.1 L44.8,39.4 L44.9,38.8 L45.0,38.2 L45.0,37.5 L45.0,36.9 L44.9,36.3 L44.8,35.7 L44.7,35.2 L44.5,34.6 L44.3,34.1 L44.0,33.6 L43.7,33.2 L43.4,32.7 L43.1,32.3 L42.7,31.9 L42.4,31.6 L42.0,31.3 L41.6,31.0 L41.1,30.7 L40.7,30.5 L40.3,30.3 L39.8,30.2 L39.4,30.0 L38.9,29.9 L38.5,29.9 L38.0,29.9 L37.6,29.9 L37.1,29.9 L36.7,30.0 L36.3,30.0 L35.9,30.2 L35.5,30.3 L35.1,30.5 L34.7,30.7 L34.4,30.9 L34.1,31.1 L33.7,31.4 L33.5,31.7 L33.2,32.0 L32.9,32.3 L32.7,32.6 L32.5,33.0 L32.4,33.3 L32.2,33.7 L32.1,34.0 L32.0,34.4 L31.9,34.8 L31.9,35.1 L31.9,35.5 L31.9,35.9 L31.9,36.3 L32.0,36.6 L32.1,37.0 L32.2,37.4 L32.3,37.7 L32.5,38.0 L32.7,38.4 L32.9,38.7 L33.1,39.0 L33.3,39.2 L33.6,39.5 L33.9,39.7 L34.2,39.9 L34.5,40.1 L34.8,40.3 L35.2,40.5 L35.5,40.6 L35.9,40.7 L36.2,40.7 L36.6,40.8 L36.9,40.8 L37.3,40.8 L37.7,40.8 L38.0,40.7" fill="none" stroke="url(#lg)" stroke-width="2.8" stroke-linecap="round"/>
<g fill="none" stroke="#9d9da6" stroke-width="2.2" stroke-linecap="round" stroke-linejoin="round">
<circle cx="30.8" cy="148.9" r="10.8"/><line x1="38.6" y1="156.7" x2="44" y2="162.3"/>
<path d="M32.2,206.5 V226 M22.5,216.2 H42"/>
<circle cx="31.8" cy="345.4" r="12.3"/>
<path d="M26.8,350.7 L30.1,344 L36.8,340.7 L33.5,347.4 Z" fill="#9d9da6" stroke-width="1.2"/><circle cx="31.8" cy="345.7" r="1" fill="#1b1c20" stroke="none"/>
<path d="M31.8,333.5 V336.5 M31.8,354.3 V357.3 M19.9,345.4 H22.9 M40.7,345.4 H43.7" stroke-width="2"/>
<path d="M31.9,397 V399.3 M24.6,412.5 V407 A7.3,7.3 0 0 1 39.2,407 V412.5"/><rect x="21.6" y="412.5" width="20.8" height="6" rx="3"/><path d="M29,418.8 A3,3 0 0 0 34.8,418.8"/>
<circle cx="32" cy="475.5" r="4.2" stroke-width="2.5"/>
<circle cx="32" cy="962" r="0"/>
<path d="M21.8,528.3 Q27,528.3 32,525.8 Q37,528.3 42.2,528.3 V538.5 Q42.2,548 32,553.2 Q21.8,548 21.8,538.5 Z"/>
<circle cx="32.2" cy="965.6" r="12.3"/>
</g>
<path d="M28.10,466.08 L29.70,465.56 L30.04,462.45 L33.96,462.45 L34.30,465.56 L35.90,466.08 L37.40,466.85 L39.84,464.88 L42.62,467.66 L40.65,470.10 L41.42,471.60 L41.94,473.20 L45.05,473.54 L45.05,477.46 L41.94,477.80 L41.42,479.40 L40.65,480.90 L42.62,483.34 L39.84,486.12 L37.40,484.15 L35.90,484.92 L34.30,485.44 L33.96,488.55 L30.04,488.55 L29.70,485.44 L28.10,484.92 L26.60,484.15 L24.16,486.12 L21.38,483.34 L23.35,480.90 L22.58,479.40 L22.06,477.80 L18.95,477.46 L18.95,473.54 L22.06,473.20 L22.58,471.60 L23.35,470.10 L21.38,467.66 L24.16,464.88 L26.60,466.85Z" fill="none" stroke="#9d9da6" stroke-width="2.2" stroke-linejoin="round"/>
<g fill="none" stroke="#d8d9e0" stroke-width="2.4">
<rect x="19.5" y="268.2" width="10" height="10"/><rect x="34.2" y="268.2" width="10" height="10"/>
<rect x="19.5" y="282.7" width="10" height="10"/><rect x="34.2" y="282.7" width="10" height="10"/>
</g>
<path d="M28.8,962.2 A3.3,3.3 0 1 1 33.6,965.2 Q32.2,966 32.2,967.6 V968.2" fill="none" stroke="#9d9da6" stroke-width="2.3" stroke-linecap="round"/><circle cx="32.2" cy="971.6" r="1.3" fill="#9d9da6"/>
<!-- avatar -->
<clipPath id="av"><circle cx="32.35" cy="902" r="16.2"/></clipPath>
<g clip-path="url(#av)">
<rect x="15" y="885" width="35" height="35" fill="#4f7c12"/>
<g fill="#f08878">
<rect x="26" y="888.9" width="3.1" height="12.9"/><rect x="36" y="888.9" width="3.1" height="12.9"/><rect x="29.1" y="892.4" width="6.9" height="3.8"/>
<rect x="20" y="889" width="2.9" height="3.4"/><rect x="42.2" y="889" width="2.7" height="3.4"/>
<rect x="19.1" y="902" width="6.9" height="12.5"/><rect x="26" y="908" width="3.1" height="3.6"/>
<rect x="39.1" y="902" width="6.9" height="12.5"/><rect x="36" y="908" width="3.1" height="3.6"/>
<rect x="29.1" y="904.9" width="6.9" height="3.1"/><rect x="29.1" y="911.6" width="6.9" height="2.9"/>
</g>
</g>
</svg>
<div class="a" style="left:0px;top:1011px;width:1852px;height:5px;background:#18191b;"></div>
<div class="a" style="left:0px;top:1016px;width:1870px;height:2px;background:#000;"></div>
</body></html>
